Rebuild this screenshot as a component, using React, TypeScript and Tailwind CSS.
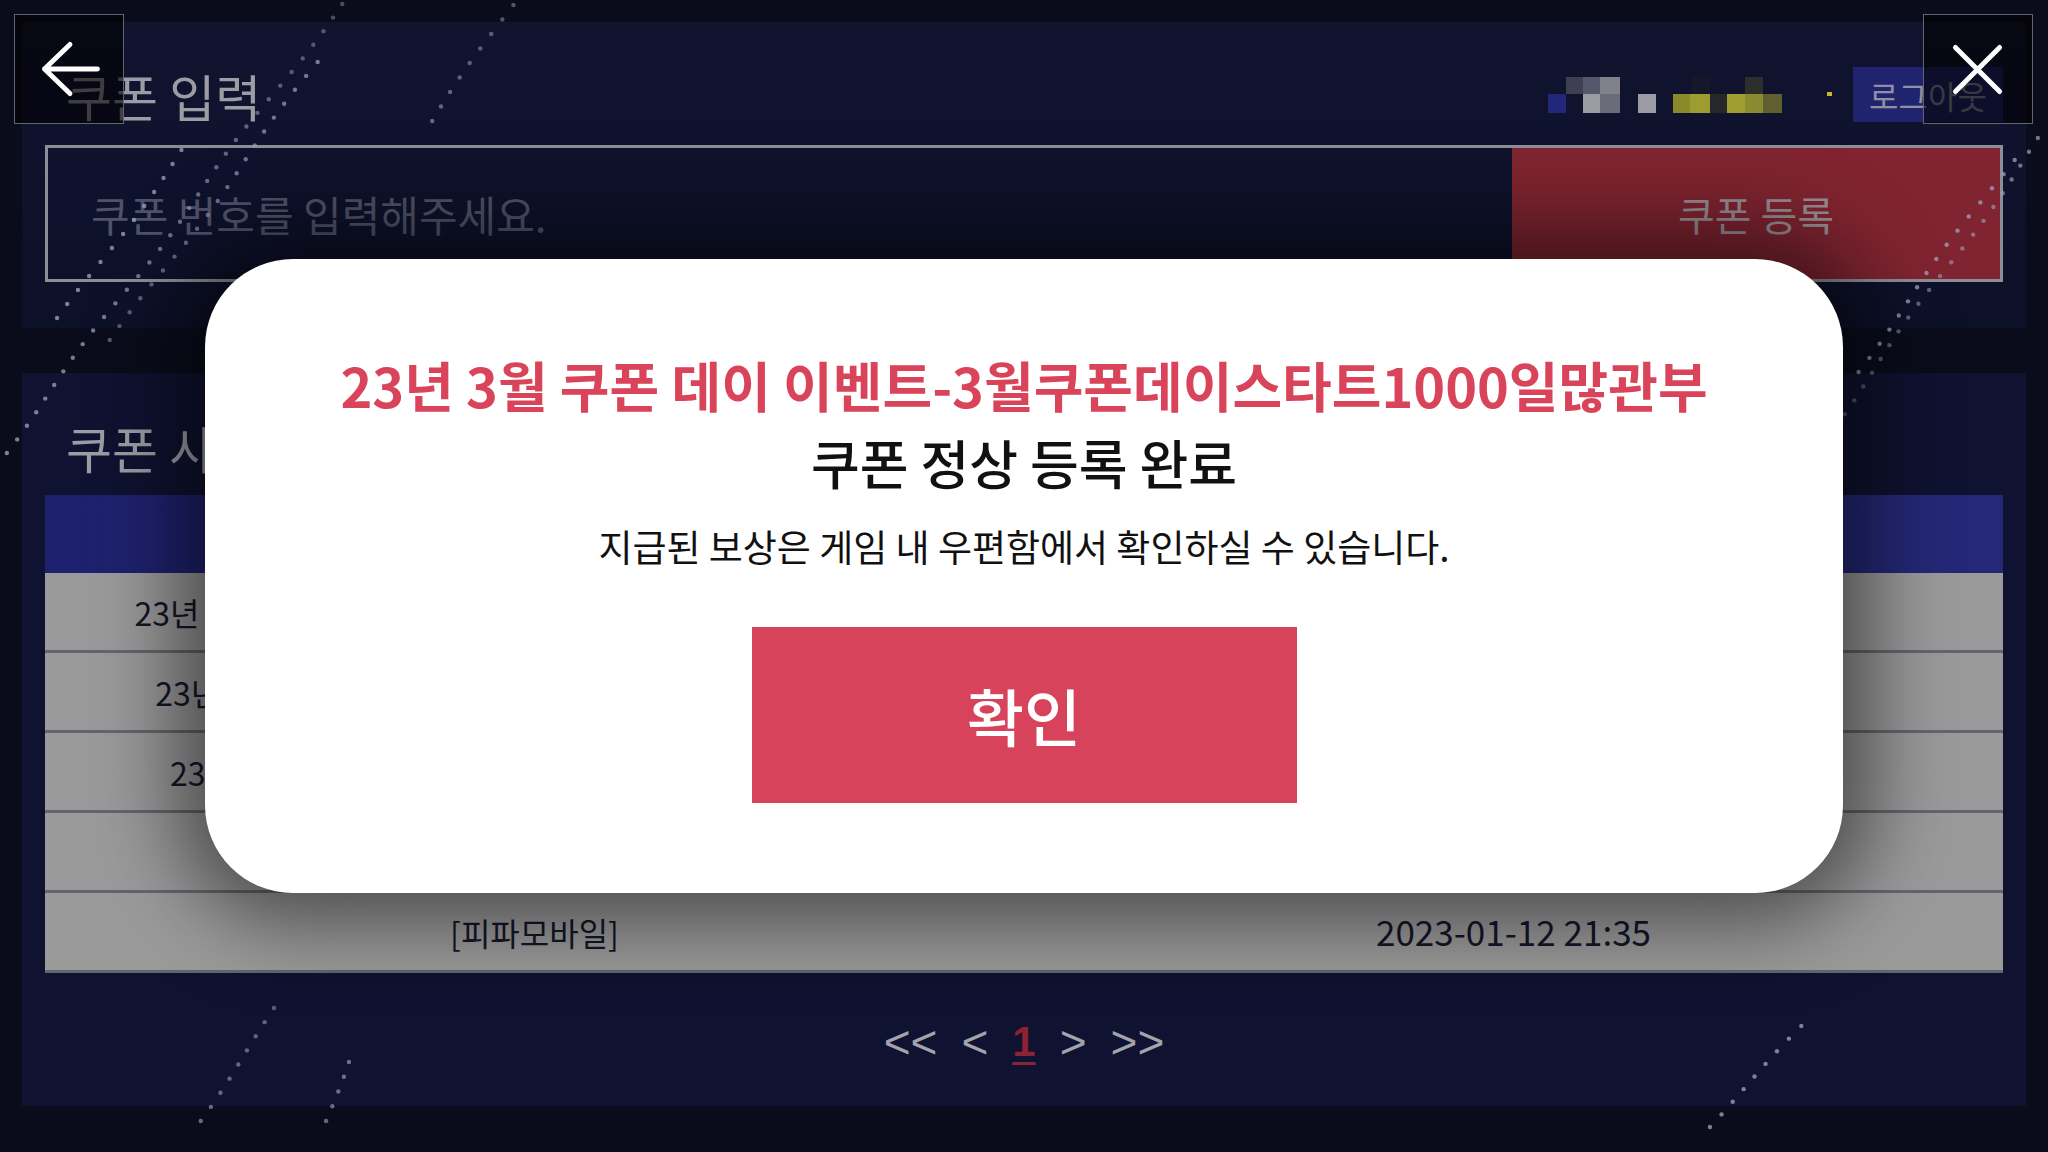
import React from 'react'

const font = "font-['Noto_Sans_CJK_KR','Noto_Sans',sans-serif]"

const rows = [
  { name: '23년 3월 쿠폰 데이 이벤트-3월쿠폰데이스타트1000일많관부', date: '2023-03-01 20:12' },
  { name: '23년 2월 쿠폰 데이 이벤트-2월쿠폰데이발렌타인데이선물', date: '2023-02-01 19:47' },
  { name: '23년 1월 쿠폰 데이 이벤트-1월쿠폰데이새해맞이큰선물', date: '2023-01-20 22:03' },
  { name: '[피파모바일] 설날 특별 쿠폰', date: '2023-01-20 21:58' },
  { name: '[피파모바일]', date: '2023-01-12 21:35' },
]

// sparkle streaks in the background: [x0, y0, x1, y1]
const streaks: number[][] = [
  [341, 4, 4, 453],
  [318, 62, 112, 340],
  [182, 150, 60, 318],
  [512, 5, 433, 121],
  [2040, 138, 1832, 428],
  [2012, 160, 1856, 372],
  [277, 1008, 198, 1121],
  [346, 1062, 326, 1121],
  [1804, 1026, 1707, 1127],
]

function dots() {
  const out: { x: number; y: number; o: number }[] = []
  streaks.forEach(([x0, y0, x1, y1], si) => {
    const len = Math.hypot(x1 - x0, y1 - y0)
    const n = Math.round(len / 17)
    for (let i = 0; i <= n; i++) {
      const t = i / n
      const j = Math.sin((i + 1) * 12.9898 + si * 78.233) * 3
      out.push({ x: x0 + (x1 - x0) * t + j, y: y0 + (y1 - y0) * t, o: 0.45 + 0.35 * Math.abs(Math.sin(i * 3.1 + si)) })
    }
  })
  return out
}

function Nickname() {
  const cells: [number, number, number, string][] = [
    [18, 0, 17, '#3e4052'], [35, 0, 17, '#55586a'], [52, 0, 20, '#808189'], [144, 0, 18, '#16182a'], [197, 0, 18, '#2c2f2b'],
    [0, 17, 18, '#23277a'], [35, 17, 17, '#9b9ba3'], [52, 17, 20, '#6b6c79'], [90, 17, 18, '#9b9ba3'],
    [125, 17, 17, '#8a8a2b'], [142, 17, 20, '#9e9c30'], [162, 17, 17, '#25272b'], [179, 17, 18, '#a09e2e'],
    [197, 17, 18, '#8a8a30'], [215, 17, 19, '#5f5f30'],
  ]
  return (
    <svg width="290" height="36" viewBox="0 0 290 36">
      {cells.map(([x, y, w, c], i) => <rect key={i} x={x} y={y} width={w} height={y === 0 ? 17 : 19} fill={c} />)}
      <rect x="279" y="15" width="5" height="4" fill="#c8b830" />
    </svg>
  )
}

export default function App() {
  return (
    <div className={`relative w-[2048px] h-[1152px] overflow-hidden bg-[#0a0c1b] ${font}`}>
      <div className="flex flex-col px-[22px] pt-[22px]">
        {/* coupon input panel */}
        <div className="flex flex-col bg-gradient-to-b from-[#10142f] to-[#0d1029] px-[23px] pt-[45px] pb-[46px]">
          <div className="flex h-[55px] items-center justify-between">
            <h1 className="ml-[21px] text-[50px] leading-none text-[#9c9ca4]">쿠폰 입력</h1>
            <div className="flex items-center gap-[15px]">
              <Nickname />
              <button className="flex h-[55px] w-[150px] items-center justify-center bg-[#20246f] text-[32px] text-[#8d8fa2]">로그아웃</button>
            </div>
          </div>
          <div className="mt-[23px] flex h-[137px] border-[3px] border-[#8d8d96]">
            <div className="flex flex-1 items-center pl-[43px] text-[42px] text-[#4f5268]">쿠폰 번호를 입력해주세요.</div>
            <button className="flex w-[488px] items-center justify-center bg-[#7f2430] text-[40px] text-[#9a8c94]">쿠폰 등록</button>
          </div>
        </div>

        {/* coupon history panel */}
        <div className="mt-[45px] flex h-[733px] flex-col bg-[#0f1230] px-[23px] pt-[47px]">
          <h2 className="ml-[21px] h-[55px] text-[50px] leading-[55px] text-[#9c9ca4]">쿠폰 사용 내역</h2>
          <div className="mt-[20px] flex flex-col">
            <div className="grid h-[78px] grid-cols-2 items-center bg-gradient-to-r from-[#1e216e] to-[#242877] text-center text-[32px] text-[#c9cbe0]">
              <span>쿠폰명</span>
              <span>등록일시</span>
            </div>
            {rows.map((r) => (
              <div key={r.name} className="grid h-[80px] grid-cols-2 items-center border-b-[3px] border-[#64656f] bg-[#9a9a9a] text-center text-[32px] text-[#141629]">
                <span className="whitespace-nowrap">{r.name}</span>
                <span className="whitespace-nowrap text-[35px]">{r.date}</span>
              </div>
            ))}
          </div>
          <div className="mt-[44px] flex items-center justify-center gap-[24px] font-['Liberation_Sans',sans-serif] text-[46px] leading-[50px] text-[#a3a3ab]">
            <span>{'<<'}</span>
            <span>{'<'}</span>
            <span className="text-[42px] font-bold text-[#8c2232] underline decoration-[3px] underline-offset-[6px]">1</span>
            <span>{'>'}</span>
            <span>{'>>'}</span>
          </div>
        </div>
      </div>

      {/* background sparkles */}
      <svg className="pointer-events-none absolute inset-0" width="2048" height="1152">
        {dots().map((d, i) => <circle key={i} cx={d.x} cy={d.y} r="2.2" fill="#9a9eb8" opacity={d.o} />)}
      </svg>

      {/* back / close buttons */}
      <button className="absolute left-[14px] top-[14px] flex h-[110px] w-[110px] items-center justify-center border-[1.5px] border-[#62646f] bg-black/60">
        <svg width="110" height="110" viewBox="0 0 110 110" fill="none" stroke="#fff" strokeWidth="5" strokeLinecap="round" strokeLinejoin="round">
          <path d="M30 55 H84 M56 30 L30 55 L56 80" />
        </svg>
      </button>
      <button className="absolute right-[15px] top-[14px] flex h-[110px] w-[110px] items-center justify-center border-[1.5px] border-[#62646f] bg-black/60">
        <svg width="110" height="110" viewBox="0 0 110 110" fill="none" stroke="#fff" strokeWidth="5" strokeLinecap="round">
          <path d="M32 33 L77 78 M77 33 L32 78" />
        </svg>
      </button>

      {/* result modal */}
      <div className="absolute inset-0 flex items-center justify-center">
        <div className="flex h-[634px] w-[1638px] flex-col items-center rounded-[88px] bg-white pt-[94px] shadow-[0_0_80px_30px_rgba(0,0,0,0.5)]">
          <p className="h-[64px] whitespace-nowrap text-[54px] font-bold leading-[64px] text-[#d9445a]">23년 3월 쿠폰 데이 이벤트-3월쿠폰데이스타트1000일많관부</p>
          <p className="mt-[14px] text-[53px] font-medium leading-[62px] text-[#111]">쿠폰 정상 등록 완료</p>
          <p className="mt-[30px] text-[37px] leading-[46px] text-[#111]">지급된 보상은 게임 내 우편함에서 확인하실 수 있습니다.</p>
          <button className="mt-[58px] flex h-[176px] w-[545px] items-center justify-center bg-[#d6435a] text-[62px] font-medium text-white">확인</button>
        </div>
      </div>
    </div>
  )
}
